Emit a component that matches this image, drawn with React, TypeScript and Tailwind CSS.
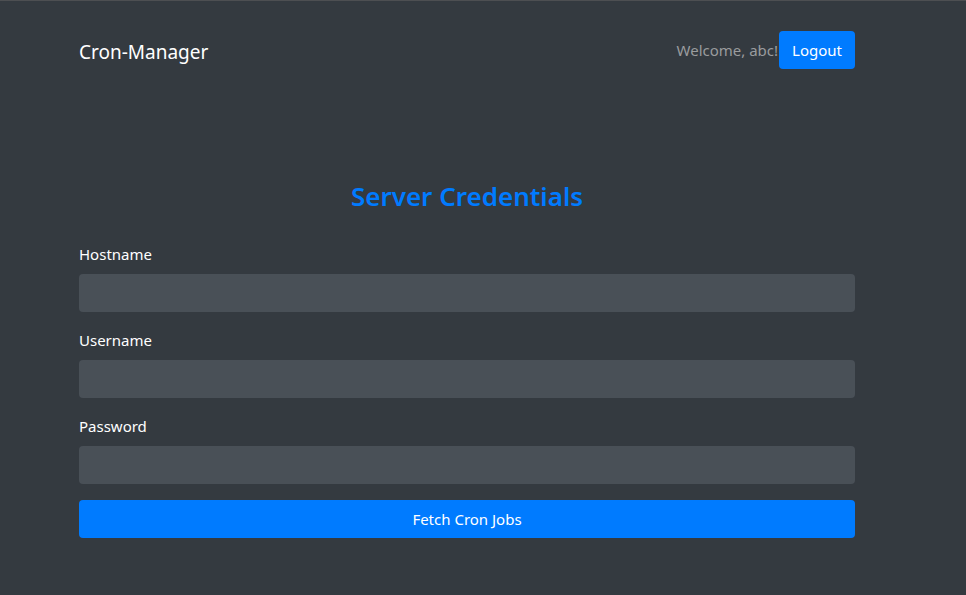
export default function App() {
  const fields = ["Hostname", "Username", "Password"];

  return (
    <div
      className="min-h-[595px] bg-[#343a40] border-t border-[#4d4f52] text-white"
      style={{ fontFamily: '"Noto Sans", "Open Sans", sans-serif' }}
    >
      <div className="ml-[79px] w-[776px]">
        {/* Navbar */}
        <nav className="flex items-center justify-between h-[100px] pb-[2px]">
          <span className="text-[19px] leading-none pt-[4px]">Cron-Manager</span>
          <div className="flex items-center">
            <span className="text-[15px] text-[#9a9c9e]">Welcome, abc!</span>
            <button className="ml-[1px] h-[38px] px-[13px] rounded bg-[#007bff] text-[15px] text-white">
              Logout
            </button>
          </div>
        </nav>

        {/* Form */}
        <h2 className="mt-[78px] text-center text-[26px] leading-[34px] font-semibold text-[#007bff]">
          Server Credentials
        </h2>

        <form className="mt-[29px]">
          {fields.map((f) => (
            <div key={f} className="mb-4">
              <label className="block text-[15px] leading-6 mb-2">{f}</label>
              <input
                type={f === "Password" ? "password" : "text"}
                className="block w-full h-[38px] rounded bg-[#495057] outline-none px-3"
              />
            </div>
          ))}
          <button
            type="button"
            className="w-full h-[38px] rounded bg-[#007bff] text-[15px] text-white"
          >
            Fetch Cron Jobs
          </button>
        </form>
      </div>
    </div>
  );
}
